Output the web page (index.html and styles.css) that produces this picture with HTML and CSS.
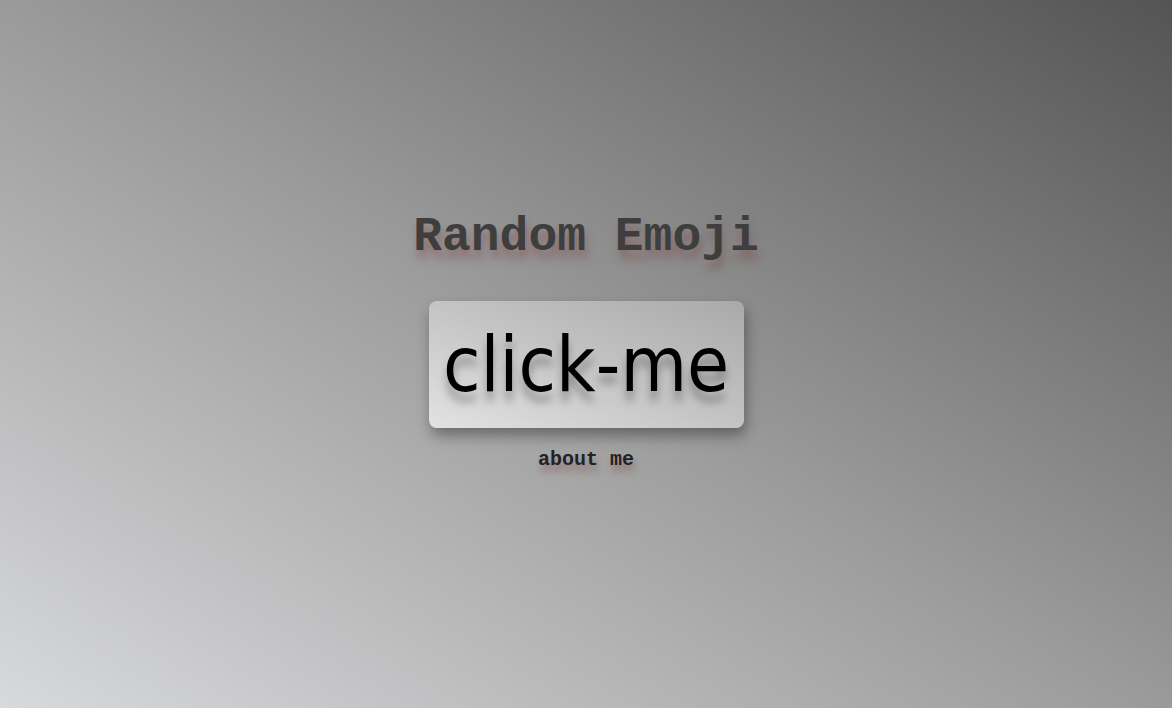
FILE: index.html
```html
<!DOCTYPE html>
<html>
<head>
<meta charset="utf-8">
<link rel="stylesheet" href="styles.css">
</head>
<body>
<main class="page">
  <h1 class="title">Random Emoji</h1>
  <button class="click-btn">click-me</button>
  <a class="about" href="#">about me</a>
</main>
</body>
</html>
```
FILE: styles.css
```css
html, body {
  margin: 0;
  padding: 0;
  height: 100%;
}
body {
  background: linear-gradient(to top right, #d8d9db 0%, #9a9a9a 50%, #545454 100%);
  overflow: hidden;
}
.page {
  display: flex;
  flex-direction: column;
  align-items: center;
  padding-top: 209px;
}
.title {
  margin: 0;
  font-family: "Liberation Mono", "Courier New", monospace;
  font-weight: bold;
  font-size: 48px;
  line-height: 56px;
  color: #3e3e3e;
  text-shadow: 2px 9px 9px rgba(120, 40, 40, 0.35);
}
.click-btn {
  margin-top: 36px;
  width: 315px;
  height: 127px;
  border: none;
  border-radius: 8px;
  background: linear-gradient(to top right, #e2e2e2 0%, #c4c4c4 50%, #a9a9a9 100%);
  box-shadow: 2px 8px 14px rgba(0, 0, 0, 0.35);
  font-family: "DejaVu Sans Condensed", "DejaVu Sans", sans-serif;
  font-size: 76px;
  color: #000;
  text-shadow: 0 10px 8px rgba(0, 0, 0, 0.3);
  padding: 0;
  cursor: pointer;
}
.about {
  margin-top: 20px;
  font-family: "Liberation Mono", "Courier New", monospace;
  font-weight: bold;
  font-size: 20px;
  color: #222;
  text-decoration: none;
  text-shadow: 2px 7px 6px rgba(120, 40, 40, 0.35);
}
```
